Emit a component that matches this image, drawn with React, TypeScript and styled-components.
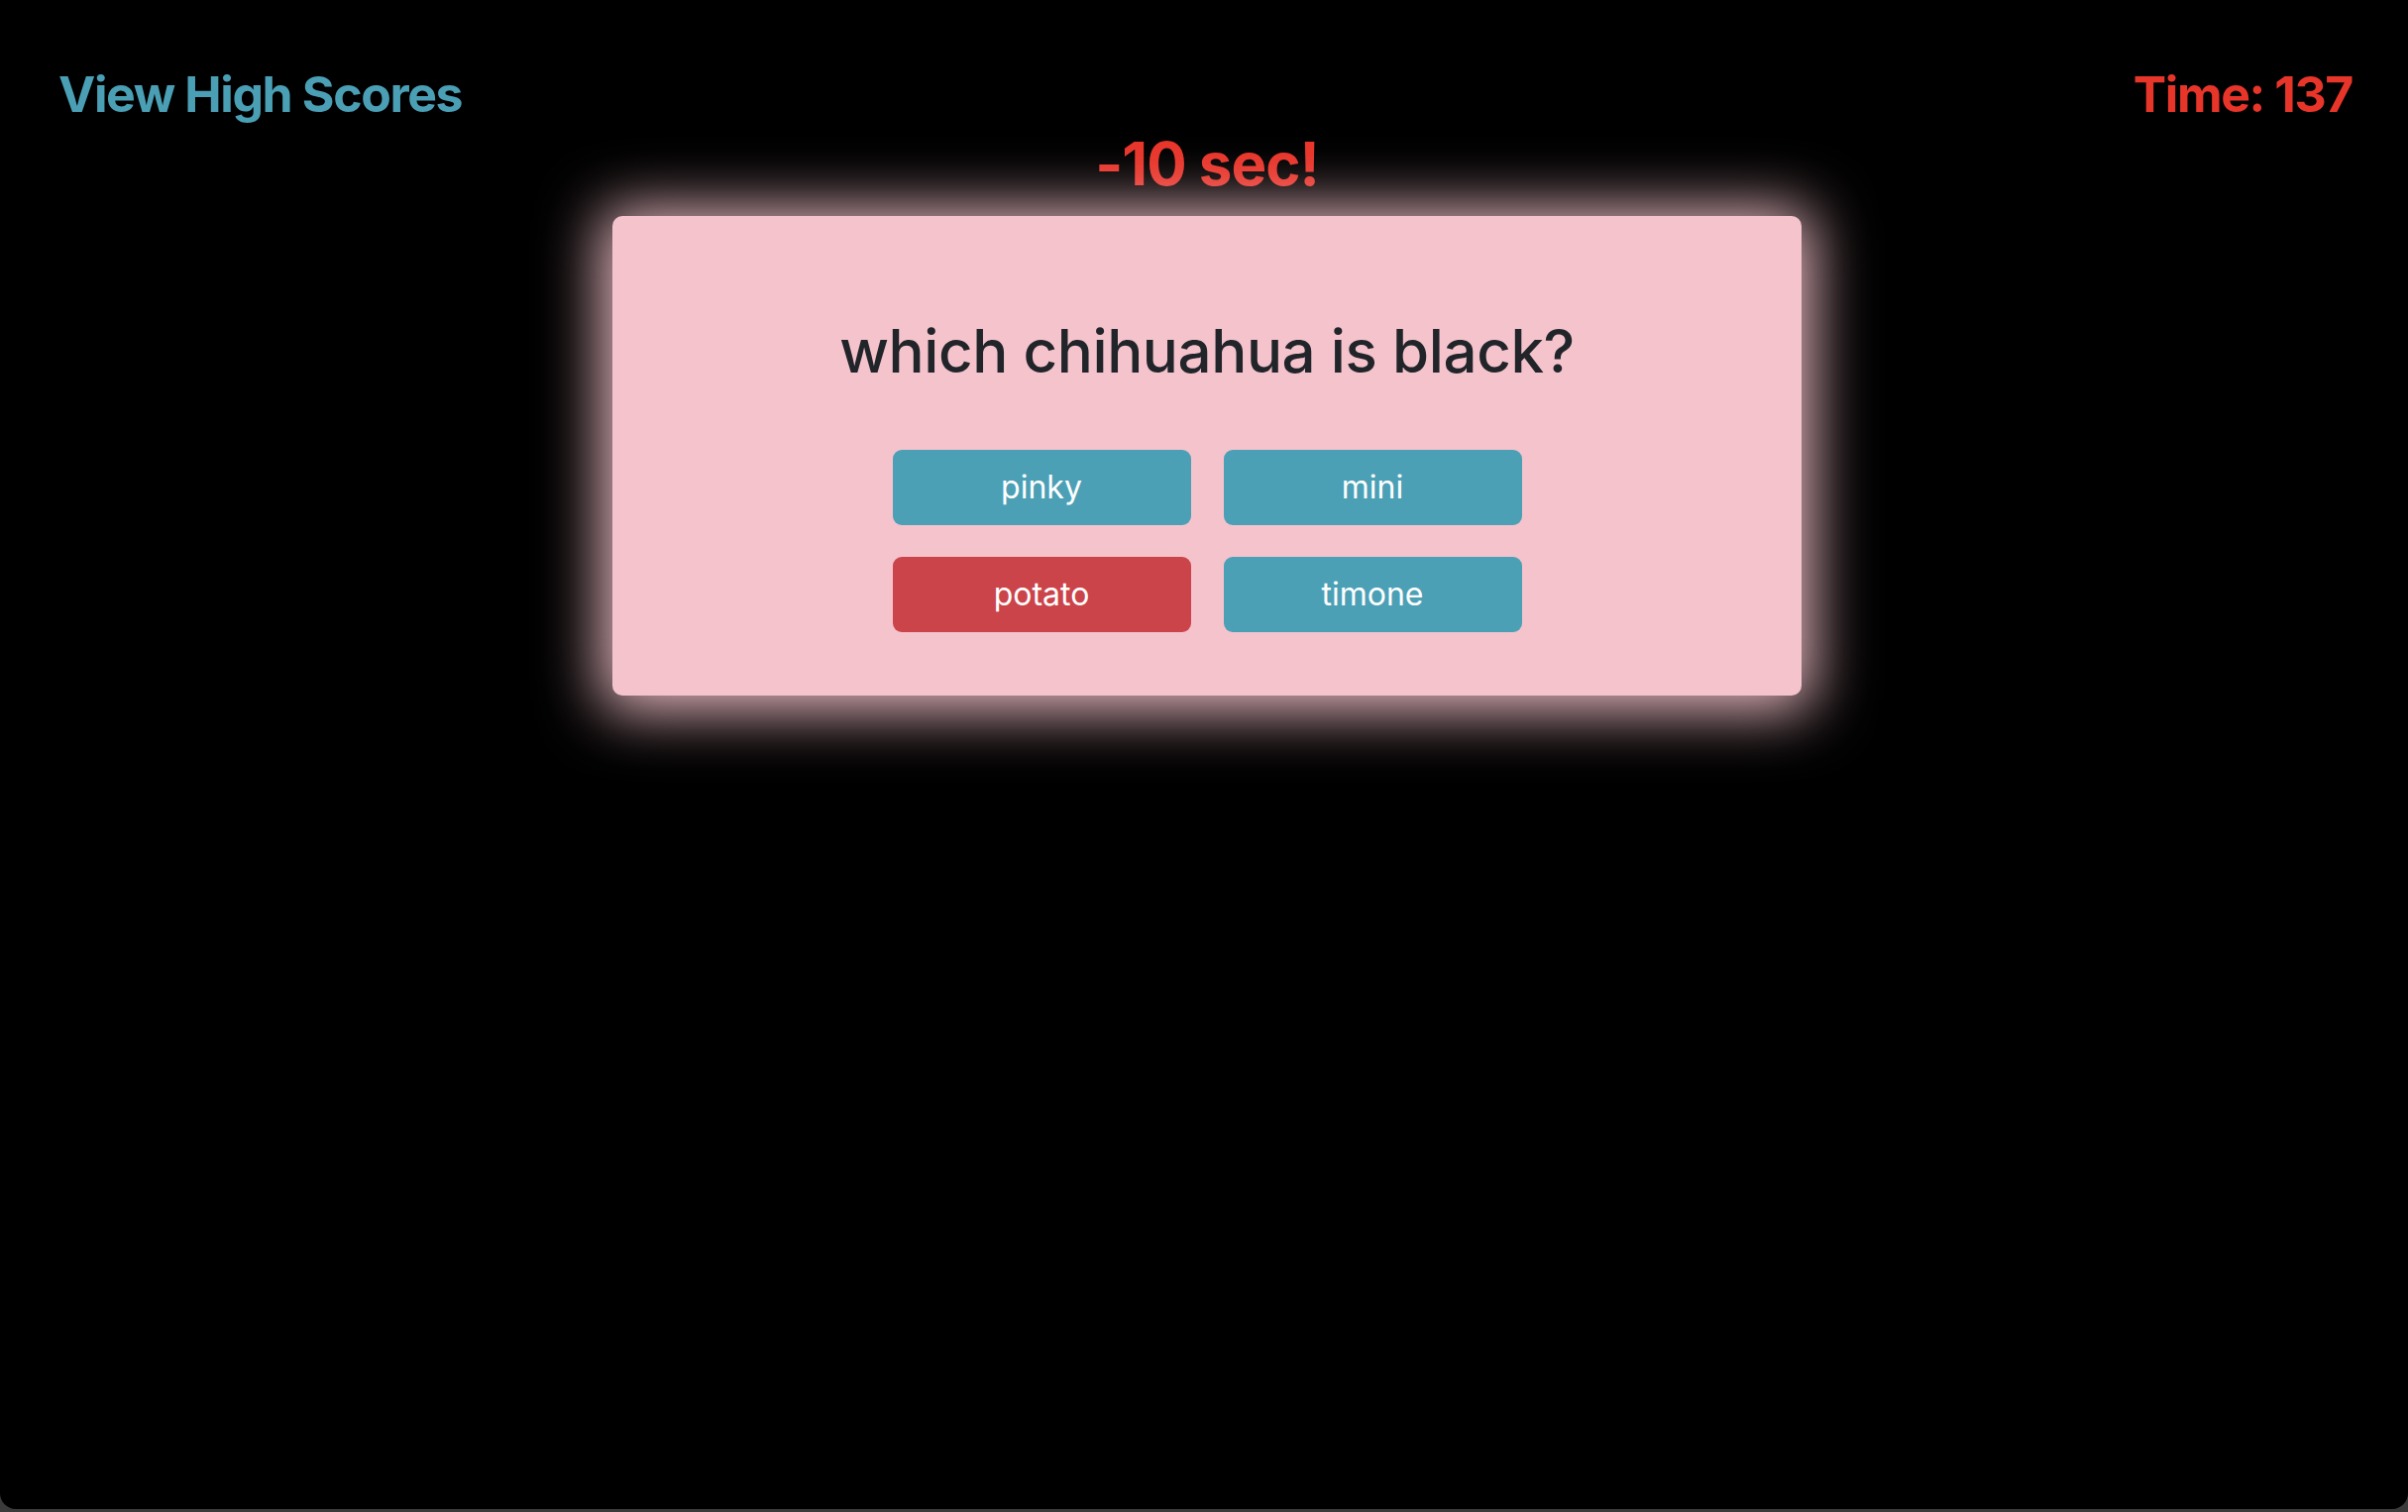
import React from "react";
import styled, { createGlobalStyle } from "styled-components";

const GlobalStyle = createGlobalStyle`
  html, body {
    margin: 0;
    padding: 0;
    background: #3b3b3b;
  }
  body {
    font-family: Inter, "Noto Sans", "Liberation Sans", sans-serif;
  }
`;

const Page = styled.div`
  height: 1523px;
  box-sizing: border-box;
  padding-left: 6px;
  background: #000;
  border-radius: 0 0 16px 16px;
  overflow: hidden;
  display: flex;
  flex-direction: column;
`;

const Header = styled.header`
  display: flex;
  justify-content: space-between;
  align-items: flex-start;
  padding: 65px 56px 0 53px;
`;

const HeaderText = styled.div<{ $color: string }>`
  font-size: 50px;
  line-height: 60px;
  font-weight: 700;
  letter-spacing: -1.4px;
  color: ${(p) => p.$color};
`;

const Penalty = styled.div`
  margin-top: 10px;
  text-align: center;
  font-size: 60px;
  line-height: 60px;
  font-weight: 700;
  letter-spacing: -1px;
  color: #e8352a;
`;

const Card = styled.main`
  margin: 23px auto 0;
  width: 1200px;
  box-sizing: border-box;
  padding: 100px 0 64px;
  background: #f4c3cc;
  border-radius: 10px;
  box-shadow: 0 4px 60px 12px rgba(244, 195, 204, 0.95);
  display: flex;
  flex-direction: column;
  align-items: center;
`;

const Question = styled.h2`
  margin: 0;
  font-size: 60px;
  line-height: 72px;
  font-weight: 500;
  letter-spacing: -0.4px;
  color: #212529;
`;

const Choices = styled.div`
  margin-top: 64px;
  display: grid;
  grid-template-columns: repeat(2, 301px);
  grid-auto-rows: 76px;
  column-gap: 33px;
  row-gap: 32px;
`;

const Choice = styled.button<{ $wrong?: boolean }>`
  border: none;
  border-radius: 9px;
  background: ${(p) => (p.$wrong ? "#cb444a" : "#4ca0b6")};
  color: #fff;
  font-family: inherit;
  font-size: 32px;
  font-weight: 400;
  line-height: 1;
  padding: 0;
  cursor: pointer;
`;

const choices = [
  { label: "pinky" },
  { label: "mini" },
  { label: "potato", wrong: true },
  { label: "timone" },
];

export default function App() {
  return (
    <>
      <GlobalStyle />
      <Page>
        <Header>
          <HeaderText $color="#4a9fb5">View High Scores</HeaderText>
          <HeaderText $color="#e8352a">Time: 137</HeaderText>
        </Header>
        <Penalty>-10 sec!</Penalty>
        <Card>
          <Question>which chihuahua is black?</Question>
          <Choices>
            {choices.map((c) => (
              <Choice key={c.label} $wrong={c.wrong}>
                {c.label}
              </Choice>
            ))}
          </Choices>
        </Card>
      </Page>
    </>
  );
}
